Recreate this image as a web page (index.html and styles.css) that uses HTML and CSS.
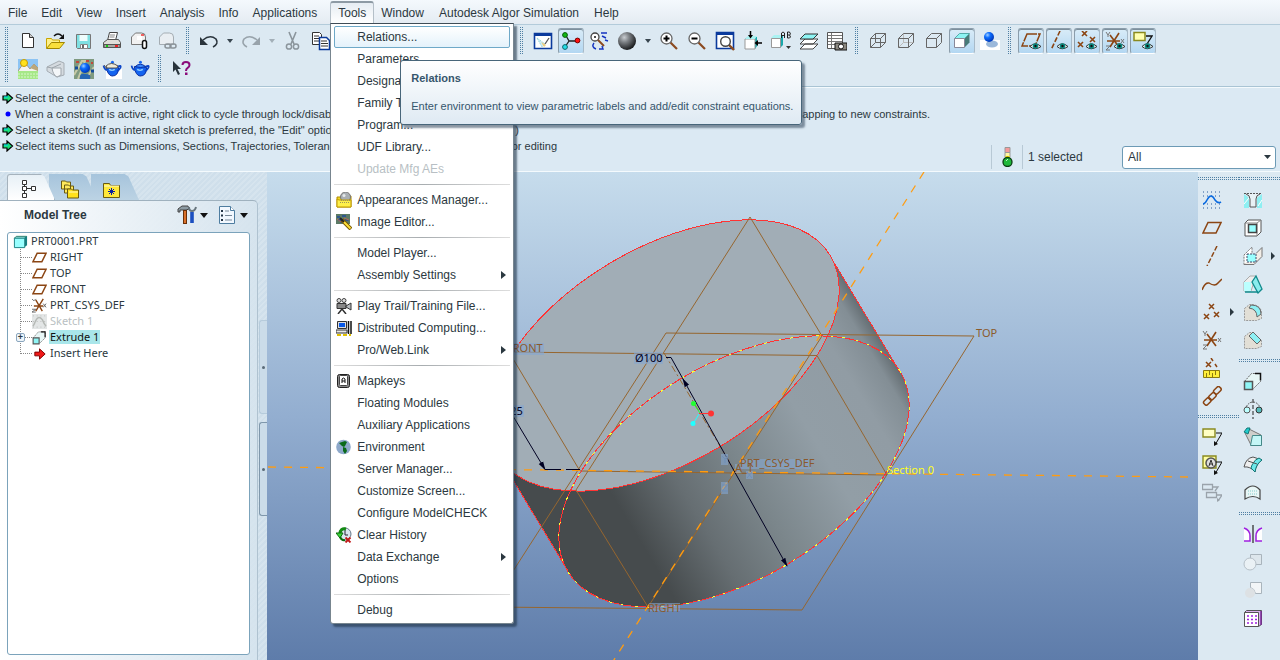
FILE: index.html
```html
<!DOCTYPE html>
<html lang="en">
<head>
<meta charset="utf-8">
<title>PRT0001</title>
<link rel="stylesheet" href="styles.css">
</head>
<body>
<svg class="defs" aria-hidden="true">
  <defs>
    <radialGradient id="ball" cx=".35" cy=".3" r=".7"><stop offset="0" stop-color="#c8ccd0"/><stop offset=".4" stop-color="#7b7f83"/><stop offset="1" stop-color="#1c1e20"/></radialGradient>
    <radialGradient id="blueball" cx=".35" cy=".3" r=".7"><stop offset="0" stop-color="#9fd0ff"/><stop offset=".4" stop-color="#0a6cff"/><stop offset="1" stop-color="#0038b8"/></radialGradient>
    <symbol id="eye" viewBox="0 0 11 8"><path d="M0 4.500Q5 -1 11 4.500Q5 9 0 4.500z" fill="#eef4f4" stroke="#333" /><circle cx="5.500" cy="4" r="2.800" fill="#0a8a80"/><circle cx="5.500" cy="4" r="1.200" fill="#111"/></symbol>
    <symbol id="plane" viewBox="0 0 16 12"><path d="M5.500 1.500H15L10.500 10.500H1z" fill="none" stroke="#8b4513" stroke-width="1.600"/></symbol>
    <symbol id="go" viewBox="0 0 12 12"><path d="M1 4h4V1l5.500 5L5 11V8H1z" fill="#1be07a" stroke="#000" stroke-width="1.200"/><path d="M2 5h4" stroke="#0cf"/></symbol>
    <symbol id="wire" viewBox="0 0 20 20"><path d="M2.500 7.500h10v9h-10zM7.500 2.500h10v9h-10zM2.500 7.500l5-5M12.500 7.500l5-5M12.500 16.500l5-5M2.500 16.500l5-5" fill="none" stroke="#666"/></symbol>
    <symbol id="csys" viewBox="0 0 20 20"><path d="M2 10h13M5 4l9 12M14 2L5 16" stroke="#8b4513" stroke-width="1.600" fill="none"/><path d="M1 1l2 3 2-3M3 4v2M16 8l3 4M19 8l-3 4M1 15h4l-4 4h4" stroke="#777" fill="none"/></symbol>
    <symbol id="branch" viewBox="0 0 12 16"><path d="M.5 0v16M1 8.500h11" stroke="#888" stroke-dasharray="1 1"/></symbol>
    <symbol id="branch-end" viewBox="0 0 12 16"><path d="M.5 0v9M1 8.500h11" stroke="#888" stroke-dasharray="1 1"/></symbol>
    <symbol id="extrude" viewBox="0 0 20 20"><path d="M1.500 10.500l7-8h9v8l-7 7" fill="#e7f6f6" stroke="#666" stroke-dasharray="2 1"/><path d="M12 2.500h5.500v7" stroke="#111" fill="none" stroke-width="1.500"/><path d="M1.500 10.500h8v8h-8z" fill="#8ff5f5" stroke="#555" stroke-width="1.500"/></symbol>
    <symbol id="teapot" viewBox="0 0 20 18"><path d="M4 7q1 9 6 10q7 0 7-9q-6-3-13-1z" fill="#1464f0" stroke="#052a9c"/><path d="M4.500 11Q2 10 1 6M16 7q4-2 3 1t-4 4" fill="none" stroke="#0b45c8" stroke-width="1.800"/><path d="M5 7q5-5 11 0q-5 2-11 0z" fill="#3c8aff" stroke="#052a9c"/><circle cx="10.500" cy="2.500" r="1.600" fill="#1464f0"/><path d="M7 10q3 2 6 0" stroke="#8fd0ff" fill="none" stroke-width="1.500"/></symbol>
  </defs>
</svg>

<header class="menubar">
  <nav class="menus">
    <button class="menu-title">File</button>
    <button class="menu-title">Edit</button>
    <button class="menu-title">View</button>
    <button class="menu-title">Insert</button>
    <button class="menu-title">Analysis</button>
    <button class="menu-title">Info</button>
    <button class="menu-title">Applications</button>
    <div class="menu-open">
      <button class="menu-title active" aria-expanded="true">Tools</button>
      <div class="popup">
        <div class="highlight-wrap">
          <button class="item highlighted" aria-describedby="tip">Relations...</button>
          <div class="tooltip" id="tip" role="tooltip">
            <strong>Relations</strong>
            <p>Enter environment to view parametric labels and add/edit constraint equations.</p>
          </div>
        </div>
        <button class="item">Parameters...</button>
        <button class="item">Designate...</button>
        <button class="item">Family Table...</button>
        <button class="item">Program...</button>
        <button class="item">UDF Library...</button>
        <button class="item" disabled>Update Mfg AEs</button>
        <hr>
        <button class="item"><svg class="item-icon" viewBox="0 0 16 16"><path d="M1 5h4l2-2 8 1v11H1z" fill="#f4dc20" stroke="#b08a00"/><circle cx="9.500" cy="5" r="5" fill="#a9afb4" stroke="#777"/><circle cx="8" cy="3.500" r="1.500" fill="#e6eaec"/><path d="M1 15V7l2 1h12v7z" fill="#fff04a" stroke="#c09a00"/><path d="M5 8.500h9M4 10.500h9" stroke="#9a9560" stroke-dasharray="1 1"/></svg>Appearances Manager...</button>
        <button class="item"><svg class="item-icon" viewBox="0 0 16 16"><path d="M0 0h14v10H0z" fill="#5c7a66"/><path d="M1 3h3M6 2h4M2 6h5M9 6h4M4 8h4" stroke="#214c9a" stroke-width="1.500"/><path d="M1 5l4 3M8 4l5 2" stroke="#b96a52"/><path d="M6 6l9 9" stroke="#7a5800" stroke-width="4"/><path d="M6.500 6.500l8 8" stroke="#ffe03a" stroke-width="2"/><path d="M4 4l4 4" stroke="#222" stroke-width="2"/></svg>Image Editor...</button>
        <hr>
        <button class="item">Model Player...</button>
        <button class="item submenu">Assembly Settings</button>
        <hr>
        <button class="item"><svg class="item-icon" viewBox="0 0 16 16"><circle cx="3" cy="2.500" r="2" fill="#ddd" stroke="#444"/><circle cx="8" cy="2.500" r="2" fill="#ddd" stroke="#444"/><path d="M1 5.500h9v5H1z" fill="#888" stroke="#333"/><path d="M10 8l5-3v7l-5-3z" fill="#b8bcc0" stroke="#333"/><path d="M6 11l-4 5M6 11l4 5" stroke="#333" stroke-width="1.500"/></svg>Play Trail/Training File...</button>
        <button class="item"><svg class="item-icon" viewBox="0 0 16 16"><path d="M1.500 1.500h9v7h-9z" fill="#ddd" stroke="#333"/><path d="M3 3h6v4H3z" fill="#0758e8"/><path d="M0 10h11v3H0z" fill="#e8e8e8" stroke="#333"/><path d="M12.500 1v13M15 1v13" stroke="#111" stroke-width="1.500"/><path d="M1 15h14" stroke="#e0c000" stroke-width="2" stroke-dasharray="4 2"/></svg>Distributed Computing...</button>
        <button class="item submenu">Pro/Web.Link</button>
        <hr>
        <button class="item"><svg class="item-icon" viewBox="0 0 16 16"><rect x="1.500" y="1.500" width="12" height="13" rx="2" fill="#888" stroke="#222"/><rect x="3.500" y="2.500" width="8" height="10" rx="1" fill="#fff" stroke="#444"/><path d="M6 10V6l1.500-1L9 6v4M6 8h3" stroke="#111" fill="none"/></svg>Mapkeys</button>
        <button class="item">Floating Modules</button>
        <button class="item">Auxiliary Applications</button>
        <button class="item"><svg class="item-icon" viewBox="0 0 16 16"><circle cx="7.500" cy="8" r="7.300" fill="#8ea9cb"/><path d="M3 4l6-2 2 1-2 4-1 1-2-1zM7 8l3 1 1 3-2 3-2-3z" fill="#0a6a1a"/></svg>Environment</button>
        <button class="item">Server Manager...</button>
        <button class="item">Customize Screen...</button>
        <button class="item">Configure ModelCHECK</button>
        <button class="item"><svg class="item-icon" viewBox="0 0 16 16"><circle cx="9" cy="7" r="6" fill="#d8e6ee" stroke="#678"/><path d="M9 3v5h3" stroke="#223" fill="none"/><path d="M10 2Q4 1 4 7" stroke="#128a12" stroke-width="3" fill="none"/><path d="M0 6h7l-3 5z" fill="#3ad83a" stroke="#0a6a0a"/><path d="M4 10q2 4 5 3" stroke="#0a6a0a" stroke-width="2" fill="none"/><path d="M9.500 10.500l5 5M14.500 10.500l-5 5" stroke="#c01818" stroke-width="1.800"/></svg>Clear History</button>
        <button class="item submenu">Data Exchange</button>
        <button class="item">Options</button>
        <hr>
        <button class="item">Debug</button>
      </div>
    </div>
    <button class="menu-title">Window</button>
    <button class="menu-title">Autodesk Algor Simulation</button>
    <button class="menu-title">Help</button>
  </nav>
</header>

<section class="toolbars">
  <div class="toolbar">
    <div class="group">
      <button class="tool" aria-label="New"><svg viewBox="0 0 20 20"><path d="M4.500 2.500h7l4 4v10h-11z" fill="#fff" stroke="#333"/><path d="M11.500 2.500v4h4" fill="#ccc" stroke="#333"/></svg></button>
      <button class="tool" aria-label="Open"><svg viewBox="0 0 20 20"><path d="M.5 17V7.500h5l1 1.500h7v3" fill="#fdf08a" stroke="#c8a400"/><path d="M.5 17.500l5-6h13l-5 6z" fill="#f9df3c" stroke="#a08600"/><path d="M8 5q4-4 8 0" fill="none" stroke="#111" stroke-width="1.500"/><path d="M18 3v5h-5z" fill="#111"/></svg></button>
      <button class="tool" aria-label="Save"><svg viewBox="0 0 20 20"><path d="M2.500 3.500h14v14h-13l-1-1z" fill="#7fe0e2" stroke="#777"/><path d="M5.500 4h8v6h-8z" fill="#effdfd"/><path d="M6.500 13.500h7v4h-7z" fill="#fff" stroke="#888"/><path d="M8 14h2v3H8z" fill="#666"/></svg></button>
      <button class="tool" aria-label="Print"><svg viewBox="0 0 20 20"><path d="M7.500 1.500h8l-2 8h-8z" fill="#fff" stroke="#444"/><path d="M8 4h5M7.500 6h5" stroke="#888"/><path d="M1.500 11.500l4-3h11l2 3v5h-17z" fill="#e0ded8" stroke="#555"/><path d="M2 13.500h16v3H2z" fill="#aaa8a2" stroke="#555"/><path d="M4 15h2" stroke="#1c1" stroke-width="2"/><path d="M13 15h3" stroke="#e22" stroke-width="2"/></svg></button>
      <button class="tool" aria-label="Attach"><svg viewBox="0 0 20 20"><path d="M1.500 13.500V6l4-4h6q4 0 4 4v7.500z" fill="#f1f1f1" stroke="#777"/><path d="M7 5h5v4H7z" fill="#fff"/><path d="M11 4h3" stroke="#e33" stroke-width="1.500"/><rect x="12.500" y="9.500" width="4" height="8" rx="2" fill="#fff" stroke="#111" stroke-width="1.500"/></svg></button>
      <button class="tool" aria-label="Link"><svg viewBox="0 0 20 20"><path d="M1.500 13.500V6l4-4h6q4 0 4 4v7.500z" fill="#e9eef2" stroke="#a5adb3"/><rect x="7" y="13" width="6" height="4" rx="2" fill="none" stroke="#8a9298" stroke-width="1.500"/><rect x="12" y="13" width="6" height="4" rx="2" fill="none" stroke="#8a9298" stroke-width="1.500"/></svg></button>
    </div>
    <div class="group edit-group">
      <button class="tool" aria-label="Undo"><svg viewBox="0 0 20 20"><path d="M4 9q7-6 13-1q3 5-3 8" fill="none" stroke="#2a343c" stroke-width="1.600"/><path d="M1 6v8h8z" fill="#2a343c"/></svg></button>
      <button class="caret" aria-label="Undo list"></button>
      <button class="tool" aria-label="Redo"><svg viewBox="0 0 20 20"><path d="M16 9q-7-6-13-1q-3 5 3 8" fill="none" stroke="#98a3ab" stroke-width="1.600"/><path d="M19 6v8h-8z" fill="#98a3ab"/></svg></button>
      <button class="caret dim" aria-label="Redo list"></button>
      <button class="tool" aria-label="Cut"><svg viewBox="0 0 20 20"><path d="M6 1l5 12M13 1L8 13" stroke="#8b959c" stroke-width="1.600"/><circle cx="6" cy="15.500" r="2.600" fill="none" stroke="#8b959c" stroke-width="1.500"/><circle cx="13" cy="15.500" r="2.600" fill="none" stroke="#8b959c" stroke-width="1.500"/></svg></button>
      <button class="tool" aria-label="Copy"><svg viewBox="0 0 20 20"><path d="M1.500 1.500h7l2 2v10h-9z" fill="#fff" stroke="#333"/><path d="M3 5h5M3 7.500h5M3 10h5" stroke="#333"/><path d="M8.500 6.500h7l3 3v9h-10z" fill="#fff" stroke="#0a3a9a" stroke-width="1.500"/><path d="M10 10h6M10 12.500h7M10 15h7" stroke="#333"/></svg></button>
    </div>
    <div class="group">
      <button class="tool" aria-label="Repaint"><svg viewBox="0 0 20 20"><path d="M1.500 2.500h17v15h-17z" fill="#fff" stroke="#0b3a9c" stroke-width="1.600"/><path d="M1 2h18v3H1z" fill="#0b3a9c"/><path d="M4 7l8 6-3 3z" fill="#cdeefa" stroke="#8cc" stroke-dasharray="1 1"/><path d="M12 13l4-6" stroke="#555" stroke-width="1.300"/><path d="M8 11l5 3-2 2z" fill="#f3cf7a"/></svg></button>
      <button class="tool pressed" aria-label="Spin centre"><svg viewBox="0 0 20 20"><path d="M4 3l4 7-4 6M8 10h8" stroke="#222" stroke-width="1.300" fill="none"/><circle cx="4" cy="4" r="2.400" fill="#12b812" stroke="#075b07"/><circle cx="4" cy="16" r="2.400" fill="#23dfe8" stroke="#08686c"/><circle cx="16.500" cy="9.500" r="2.400" fill="#f11" stroke="#700"/></svg></button>
      <button class="tool" aria-label="Orient mode"><svg viewBox="0 0 20 20"><circle cx="6" cy="6" r="4" fill="#fff" stroke="#444" stroke-width="1.300"/><path d="M5 6h2M6 5v2" stroke="#111"/><path d="M9 9l6 6" stroke="#8b4a20" stroke-width="2"/><path d="M12 2h6M13 5l4 2M16 9l3 1M5 12q-3 4 2 6M10 18h4l-1-3" fill="none" stroke="#1433c0" stroke-width="1.400"/></svg></button>
      <button class="tool" aria-label="Appearance"><svg viewBox="0 0 20 20"><circle cx="10" cy="10" r="9" fill="url(#ball)"/></svg></button>
      <button class="caret" aria-label="Appearance list"></button>
      <button class="tool" aria-label="Zoom in"><svg viewBox="0 0 20 20"><path d="M11 11l7 7" stroke="#8b4a20" stroke-width="2.200"/><circle cx="7.500" cy="7.500" r="5.500" fill="#fff" stroke="#666" stroke-width="1.300"/><path d="M4.500 7.500h6M7.500 4.500v6" stroke="#000" stroke-width="2"/></svg></button>
      <button class="tool" aria-label="Zoom out"><svg viewBox="0 0 20 20"><path d="M11 11l7 7" stroke="#8b4a20" stroke-width="2.200"/><circle cx="7.500" cy="7.500" r="5.500" fill="#fff" stroke="#666" stroke-width="1.300"/><path d="M4.500 7.500h6" stroke="#000" stroke-width="2"/></svg></button>
      <button class="tool" aria-label="Refit"><svg viewBox="0 0 20 20"><path d="M1.500 1.500h17v16h-17z" fill="#fff" stroke="#0b3a9c" stroke-width="1.600"/><path d="M1 1h18v3H1z" fill="#0b3a9c"/><path d="M14 14l5 5" stroke="#8b4a20" stroke-width="2.400"/><circle cx="10.500" cy="10.500" r="4.800" fill="#fff" stroke="#444" stroke-width="1.400"/></svg></button>
      <button class="tool" aria-label="Reorient"><svg viewBox="0 0 20 20"><path d="M2 8l3-2h9v9l-2 3" fill="#18a8ac"/><path d="M2 8h10v10H2z" fill="#fff" stroke="#999"/><path d="M2 8l3-3h9l-2 3z" fill="#aaf2f2"/><path d="M7.500 0v5M19 12h-5" stroke="#000" stroke-width="1.500"/><path d="M5 4h5L7.500 7.500zM15 9v6l-3.500-3z" fill="#000"/></svg></button>
      <button class="tool" aria-label="Saved views"><svg viewBox="0 0 20 20"><path d="M9 17V7l3-3v10z" fill="#18a8ac"/><path d="M.5 7.500h9v9h-9z" fill="#fff" stroke="#999"/><path d="M0 7l3-3h9l-2 3z" fill="#aaf2f2"/><path d="M10.500 7V2l1.500-1 1.500 1v5M10.500 4.500h3M16.500 1v6h2l1-1-1-2 1-1-1-2zM16.500 4h2" stroke="#222" fill="none"/><path d="M15 15h5l-2.500 3z" fill="#333"/></svg></button>
      <button class="tool" aria-label="Layers"><svg viewBox="0 0 20 20"><path d="M1 18l5-5h13l-5 5zM1 13l5-5h13l-5 5z" fill="#fff" stroke="#444"/><path d="M1 8l5-5h13l-5 5z" fill="#8df3f3" stroke="#333"/></svg></button>
      <button class="tool" aria-label="View manager"><svg viewBox="0 0 20 20"><path d="M.5 1.500h15v16H.5z" fill="#fff" stroke="#555"/><path d="M1 4.500h14M1 7.500h14M1 10.500h14M1 13.500h8M4.500 2v15" stroke="#777"/><path d="M8 12h12v7H8z" fill="#8b8880" stroke="#111"/><circle cx="14" cy="15.500" r="2.500" fill="#fff" stroke="#111"/></svg></button>
    </div>
    <div class="group">
      <button class="tool" aria-label="Wireframe"><svg viewBox="0 0 20 20"><use href="#wire"/></svg></button>
      <button class="tool" aria-label="Hidden line"><svg viewBox="0 0 20 20"><path d="M7.500 2.500v9h10M2.500 16.500l5-5" fill="none" stroke="#bbb"/><path d="M2.500 7.500h10v9h-10zM2.500 7.500l5-5h10v9l-5 5M12.500 7.500l5-5" fill="none" stroke="#666"/></svg></button>
      <button class="tool" aria-label="No hidden"><svg viewBox="0 0 20 20"><path d="M2.500 7.500h10v9h-10zM2.500 7.500l5-5h10v9l-5 5M12.500 7.500l5-5" fill="none" stroke="#666"/></svg></button>
      <button class="tool pressed" aria-label="Shading"><svg viewBox="0 0 20 20"><path d="M12.500 7.500l5-5v9l-5 5z" fill="#477a78"/><path d="M2.500 7.500l5-5h10l-5 5z" fill="#8df3f3" stroke="#5aa"/><path d="M2.500 7.500h10v9h-10z" fill="#fff" stroke="#889"/></svg></button>
      <button class="tool" aria-label="Enhanced realism"><svg viewBox="0 0 20 20"><path d="M0 9h20v10H0z" fill="#fff"/><ellipse cx="12" cy="13" rx="6" ry="3.500" fill="#9bb8da"/><circle cx="9" cy="6" r="5" fill="url(#blueball)"/></svg></button>
    </div>
    <div class="group">
      <button class="tool pressed" aria-label="Plane display"><svg viewBox="0 0 20 20"><path d="M6 3h13l-5 12H1z" fill="none" stroke="#8b4513" stroke-width="1.500" stroke-dasharray="10 1"/><use href="#eye" x="9" y="11" width="11" height="8"/></svg></button>
      <button class="tool pressed" aria-label="Axis display"><svg viewBox="0 0 20 20"><path d="M11 0L2 19" stroke="#8b4513" stroke-width="1.600" stroke-dasharray="5 2"/><use href="#eye" x="8" y="11" width="11" height="8"/></svg></button>
      <button class="tool pressed" aria-label="Point display"><svg viewBox="0 0 20 20"><path d="M5 0l5 5M10 0L5 5M13 6l5 5M18 6l-5 5M1 11l5 5M6 11l-5 5" stroke="#8b4513" stroke-width="1.600"/><use href="#eye" x="9" y="11" width="11" height="8"/></svg></button>
      <button class="tool pressed" aria-label="Csys display"><svg viewBox="0 0 20 20"><use href="#csys"/><use href="#eye" x="9" y="11" width="11" height="8"/></svg></button>
      <button class="tool pressed" aria-label="Annotation display"><svg viewBox="0 0 20 20"><path d="M1 1.500h11v8H1z" fill="#ffffb0" stroke="#8a8a20" stroke-width="1.500"/><path d="M13 5h6l-5 8" fill="none" stroke="#111" stroke-width="1.300"/><use href="#eye" x="9" y="11" width="11" height="8"/></svg></button>
    </div>
  </div>
  <div class="toolbar">
    <div class="group">
      <button class="tool" aria-label="Scene"><svg viewBox="0 0 20 20"><path d="M0 0h20v12H0z" fill="#8cc4f4"/><path d="M0 12L5 5h3l4 5 4-5 4 4v4H0z" fill="#f4f4ee" stroke="#a09a88"/><path d="M12 9l4-4 4 4v3z" fill="#bba77a"/><circle cx="6" cy="4" r="3.500" fill="#ffe21c" stroke="#c79b00"/><path d="M0 12h20v8H0z" fill="#a6e887"/><path d="M0 15h20M0 18h20" stroke="#d9f7cb" stroke-dasharray="2 1"/></svg></button>
      <button class="tool" aria-label="Perspective"><svg viewBox="0 0 20 20"><path d="M1 8l12-6 5 2v12l-7 2L1 12z" fill="#d5dbe0" stroke="#a5adb3"/><path d="M6 9h9v7l-4 2q-4-2-5-9z" fill="#f3f6f8" stroke="#9ea6ac"/><path d="M1 8l5 1 9-4" stroke="#9ea6ac" fill="none"/></svg></button>
      <button class="tool" aria-label="Texture"><svg viewBox="0 0 20 20"><path d="M0 0h20v20H0z" fill="#7f9a80"/><path d="M0 16L8 2h3L4 20M12 20L20 8" stroke="#c7c9a6" stroke-width="2" fill="none"/><path d="M12 2h3M17 4h2M2 3h3M14 17h2" stroke="#c3483a" stroke-width="2"/><path d="M17 12h3M1 9h3" stroke="#144c9a" stroke-width="3"/><circle cx="11" cy="9" r="5" fill="url(#blueball)"/><path d="M6 20q-1-6 5-5 7 0 5 5z" fill="#2666b4"/></svg></button>
      <button class="tool" aria-label="Render window"><svg viewBox="0 0 20 20"><path d="M4 10h16v10H4z" fill="#fff"/><use href="#teapot" y="1" width="20" height="17"/><path d="M4 7q5-5 12 0l-1 2H5zM2 6l3 4" fill="#efe9d6" stroke="#555"/></svg></button>
      <button class="tool" aria-label="Render"><svg viewBox="0 0 20 20"><use href="#teapot" y="1" width="20" height="17"/></svg></button>
    </div>
    <div class="group">
      <button class="tool" aria-label="Context help"><svg viewBox="0 0 20 20"><path d="M2 2v11l2.500-2.500L7 16l2-1-2.500-5H10z" fill="#28343c"/><path d="M11.500 6q0-3 3.500-3t3.500 3q0 2-2 3-1.500 1-1.500 3" fill="none" stroke="#8a0a7a" stroke-width="2"/><path d="M14 13.500h2.500V16H14z" fill="#8a0a7a"/></svg></button>
    </div>
  </div>
</section>

<section class="messages">
  <ul class="log">
    <li><svg class="mark" viewBox="0 0 12 12"><use href="#go"/></svg><span>Select the center of a circle.</span></li>
    <li class="reach-far"><svg class="mark" viewBox="0 0 12 12"><circle cx="6" cy="6" r="2.500" fill="#00f"/></svg><span>When a constraint is active, right click to cycle through lock/disable</span><span class="tail">snapping to new constraints.</span></li>
    <li class="reach-near"><svg class="mark" viewBox="0 0 12 12"><use href="#go"/></svg><span>Select a sketch. (If an internal sketch is preferred, the "Edit" option</span><span class="tail">)</span></li>
    <li class="reach-mid"><svg class="mark" viewBox="0 0 12 12"><use href="#go"/></svg><span>Select items such as Dimensions, Sections, Trajectories, Tolerances</span><span class="tail">for editing</span></li>
  </ul>
  <div class="status">
    <span class="light"><svg viewBox="0 0 12 20"><path d="M4 .5h5v5H4z" fill="#f59a9a" stroke="#999"/><path d="M4 5.500h5v5H4z" fill="#fff7a0" stroke="#999"/><path d="M4.500 10h4" stroke="#e5d000" stroke-width="2"/><circle cx="6.500" cy="15" r="4.500" fill="#1fb83a" stroke="#0a3d12" stroke-width="1.300"/><path d="M5 14l2-2" stroke="#bff5c8"/></svg></span>
    <label class="count" for="filter">1 selected</label>
    <select id="filter" class="filter"><option>All</option></select>
  </div>
</section>

<main class="work">
  <aside class="navigator">
    <div class="tabs">
      <button class="tab current" aria-label="Model tree"><svg viewBox="0 0 20 20"><path d="M5.500 5v10M8 9.500h5" stroke="#333" fill="none"/><path d="M3.500 1.500h4v4h-4zM3.500 7.500h4v4h-4zM3.500 14.500h4v4h-4zM12.500 7.500h4v4h-4z" fill="#fff" stroke="#333"/></svg></button>
      <button class="tab" aria-label="Folders"><svg viewBox="0 0 20 20"><path d="M1.500 2h4l1 1h4v7h-9zM4.500 6h4l1 1h4v7h-9z" fill="#ffe95a" stroke="#6a5a10"/><path d="M7.500 10h4l1 1h6v8h-11z" fill="#ffe21c" stroke="#6a5a10"/><path d="M9 13h9" stroke="#fff9c0"/></svg></button>
      <button class="tab" aria-label="Favorites"><svg viewBox="0 0 20 20"><path d="M1.500 4.500h6l1 2h9v12h-16z" fill="#ffe83a" stroke="#6a5a10"/><path d="M2 7h15" stroke="#fffbd0"/><path d="M9.500 9v7M6 12.500h7M7 10l5 5M12 10l-5 5" stroke="#0a1fa0"/></svg></button>
    </div>
    <div class="panel">
      <div class="panel-head">
        <h2>Model Tree</h2>
        <button class="head-tool" aria-label="Settings"><svg viewBox="0 0 20 20"><path d="M1 4l4-3h6l1 3-3 1H3v2H1z" fill="#8c9ba4" stroke="#444"/><path d="M8 5v14" stroke="#6a3008" stroke-width="4"/><path d="M8 6v12" stroke="#d9702a" stroke-width="2"/><path d="M15 7v11" stroke="#1b4fc0" stroke-width="3.600"/><path d="M12 2q0 4 3 4t4-4" fill="none" stroke="#67757d" stroke-width="2"/></svg></button>
        <button class="head-tool" aria-label="Show"><svg viewBox="0 0 20 20"><path d="M2.500 1.500h11l4 4v13h-15z" fill="#f2f8ff" stroke="#4e7da0"/><path d="M13.500 1.500v4h4" fill="#fff" stroke="#4e7da0"/><path d="M4 6h2M4 10.500h2M4 15h2" stroke="#234" stroke-width="2"/><path d="M8 6h4M8 10.500h7M8 15h7" stroke="#789"/></svg></button>
      </div>
      <div class="tree">
        <div class="node root"><svg class="node-icon" viewBox="0 0 16 16"><path d="M1.500 4.500l2-2h11l-2 2z" fill="#bff" stroke="#276" /><path d="M12 4l3-2v10l-3 2z" fill="#177f80"/><path d="M1.500 4.500h11v10h-11z" fill="#9ff" stroke="#177f80"/></svg><span>PRT0001.PRT</span></div>
        <ul>
          <li class="node"><svg class="branch"><use href="#branch"/></svg><svg class="node-icon" viewBox="0 0 16 16"><use href="#plane" y="2" width="16" height="12"/></svg><span>RIGHT</span></li>
          <li class="node"><svg class="branch"><use href="#branch"/></svg><svg class="node-icon" viewBox="0 0 16 16"><use href="#plane" y="2" width="16" height="12"/></svg><span>TOP</span></li>
          <li class="node"><svg class="branch"><use href="#branch"/></svg><svg class="node-icon" viewBox="0 0 16 16"><use href="#plane" y="2" width="16" height="12"/></svg><span>FRONT</span></li>
          <li class="node"><svg class="branch"><use href="#branch"/></svg><svg class="node-icon" viewBox="0 0 16 16"><path d="M2 8.500h10M4 2l7 12M12 1L4 14" stroke="#8b4513" stroke-width="1.500"/><path d="M0 1l2 2 2-2M12 6l3 4M15 6l-3 4M0 12h4l-4 3h4" stroke="#666" fill="none"/></svg><span>PRT_CSYS_DEF</span></li>
          <li class="node off"><svg class="branch"><use href="#branch"/></svg><svg class="node-icon" viewBox="0 0 16 16"><path d="M0 0h16v16H0z" fill="#e3e6e6"/><path d="M1 13q1-1 3-6 3-6 7-1 2 5 4 7" fill="none" stroke="#b5b9b5" stroke-width="1.500"/><path d="M1 2h15M1 8h15M1 14h15" stroke="#bbb" stroke-dasharray="1 3"/></svg><span>Sketch 1</span></li>
          <li class="node selected"><button class="expander" aria-label="Expand">+</button><svg class="branch"><use href="#branch"/></svg><svg class="node-icon" viewBox="0 0 16 16"><use href="#extrude" width="16" height="16"/></svg><span>Extrude 1</span></li>
          <li class="node"><svg class="branch"><use href="#branch-end"/></svg><svg class="node-icon" viewBox="0 0 16 16"><path d="M3 6.500h5V3l6 5.500L8 14v-3.500H3z" fill="#f01818" stroke="#7a0000"/></svg><span>Insert Here</span></li>
        </ul>
      </div>
    </div>
    <div class="sashes"><button class="sash" aria-label="Resize navigator"></button><button class="sash strong" aria-label="Collapse navigator"></button></div>
  </aside>

  <section class="viewport">
    <svg class="scene" viewBox="267 172 931 488" preserveAspectRatio="xMidYMid slice" role="img" aria-label="Extruded cylinder">
      <defs>
        <linearGradient id="side" gradientUnits="userSpaceOnUse" x1="540" y1="471.500" x2="928" y2="471.500"><stop offset="0" stop-color="#464b4d"/><stop offset=".2" stop-color="#464b4d"/><stop offset=".36" stop-color="#666e72"/><stop offset=".52" stop-color="#7b868b"/><stop offset=".72" stop-color="#929ea6"/><stop offset=".88" stop-color="#919ca4"/><stop offset=".96" stop-color="#838e95"/><stop offset="1" stop-color="#646d72"/></linearGradient>
        <linearGradient id="wall" href="#side" gradientTransform="rotate(-31 734 471.500)"/>
        <marker id="tip-end" orient="auto-start-reverse" markerWidth="9" markerHeight="7" refX="8" refY="3.500" markerUnits="userSpaceOnUse"><path d="M0 1l9 2.500-9 2.500z" fill="#002"/></marker>
      </defs>
      <path d="M830 256L900 372 568 571 498 455z" fill="url(#wall)"/>
      <ellipse cx="734" cy="471.500" rx="194" ry="107" transform="rotate(-31 734 471.500)" fill="url(#side)"/>
      <path d="M830 256L900 372M568 571L498 455" stroke="#f33" shape-rendering="crispEdges"/>
      <ellipse cx="664" cy="355.500" rx="194" ry="107" transform="rotate(-31 664 355.500)" fill="#a1adb6" stroke="#f33" shape-rendering="crispEdges"/>
      <g fill="none" stroke="#96662f">
        <path d="M666 333L974 336 802 610 490 607z"/>
        <path d="M509 352L817 355.500 887 475 580 471z"/>
        <path d="M750 217L822 336 648 607 576 490z"/>
        <path d="M664 353L735 471" stroke-dasharray="7 3 2 3"/>
      </g>
      <ellipse cx="734" cy="471.500" rx="194" ry="107" transform="rotate(-31 734 471.500)" fill="none" stroke="#f33" shape-rendering="crispEdges"/>
      <ellipse cx="734" cy="471.500" rx="194" ry="107" transform="rotate(-31 734 471.500)" fill="none" stroke="#ff3" stroke-dasharray="2 9 3 12" shape-rendering="crispEdges"/>
      <path d="M924 172L612 663M268 467L1190 477" fill="none" stroke="#ff9c10" stroke-width="1.300" stroke-dasharray="8 8"/>
      <g stroke="#002" fill="none">
        <path d="M666 357.500h5L683 379"/>
        <path d="M683 379L787 566" marker-start="url(#tip-end)" marker-end="url(#tip-end)"/>
        <path d="M510 411L545 469.500" marker-end="url(#tip-end)"/>
        <path d="M545 469.500h35" stroke-dasharray="16 5"/>
      </g>
      <path d="M693 403l7 10" stroke="#2f3"/><path d="M699 413.500h12" stroke="#f33"/><path d="M699 414l-6 10" stroke="#2ff"/>
      <circle cx="693.500" cy="403.500" r="2.500" fill="#2f3"/><circle cx="711" cy="413.500" r="3" fill="#f33"/><circle cx="693" cy="423.500" r="2.500" fill="#2ff"/>
      <path d="M741 459h70v10h-70zM721 454h7v11h-7zM721 482h7v12h-7zM735 464h6v9h-6zM746 471h7v8h-7zM649 603h31v8h-31zM509 343h35v12h-35zM634 352h29v12h-29zM510 405h14v12h-14z" fill="#86a6d0" opacity=".6"/>
      <g class="scene-text brown">
        <text x="976" y="337">TOP</text><text x="507" y="352">FRONT</text><text x="740" y="467">PRT_CSYS_DEF</text><text x="648" y="612">RIGHT</text><text x="735" y="472">A_1</text>
      </g>
      <g class="scene-text navy"><text x="635" y="362">Ø100</text><text x="504" y="415">125</text></g>
      <text class="scene-text yellow" x="887" y="474">Section 0</text>
      <g fill="none" stroke="#6f8fb8"><path d="M722 456l3 3 3-3M725 459v4M722 485h6l-6 6h6M747 472l5 6M752 472l-5 6"/></g>
    </svg>
  </section>

  <aside class="feature-bar">
    <div class="column">
      <button class="tool" aria-label="Sketch"><svg viewBox="0 0 20 20"><path d="M1 2h18M1 6h18M1 14h18M1 18h18" stroke="#27589c" stroke-dasharray="1 3"/><path d="M1 14q2 0 4-4 4-8 8 0 3 4 6 2" fill="none" stroke="#0a6ae0" stroke-width="1.600"/></svg></button>
      <button class="tool" aria-label="Plane"><svg viewBox="0 0 20 20"><path d="M6 4.500h13L14 15H1z" fill="none" stroke="#8b4513" stroke-width="1.500"/></svg></button>
      <button class="tool" aria-label="Axis"><svg viewBox="0 0 20 20"><path d="M15 0L5 20" stroke="#8b4513" stroke-width="1.500" stroke-dasharray="5 2"/></svg></button>
      <button class="tool" aria-label="Curve"><svg viewBox="0 0 20 20"><path d="M0 16q3-8 7-7 6 4 9 0l4-4" fill="none" stroke="#8b4513" stroke-width="1.500"/></svg></button>
      <button class="tool more" aria-label="Point"><svg viewBox="0 0 20 20"><path d="M7 2l5 5M12 2L7 7M12 10l5 5M17 10l-5 5M2 12l5 5M7 12l-5 5" stroke="#8b4513" stroke-width="1.500"/></svg></button>
      <button class="tool" aria-label="Coordinate system"><svg viewBox="0 0 20 20"><use href="#csys"/></svg></button>
      <button class="tool" aria-label="Analysis"><svg viewBox="0 0 20 20"><path d="M4 4l5 5M9 4L4 9M9 0l2 3M13 6l2 3" stroke="#8b4513" stroke-width="1.500"/><path d="M1.500 12.500h16v7h-16z" fill="#ffef3a" stroke="#8a7a10"/><path d="M4.500 15v4M7.500 13v4M10.500 15v4M13.500 13v4" stroke="#8a7a10"/></svg></button>
      <button class="tool" aria-label="Reference"><svg viewBox="0 0 20 20"><g fill="none" stroke="#8b4513" stroke-width="1.500"><rect x="-4" y="-2" width="8" height="5" rx="2" transform="translate(5 15) rotate(-45)"/><rect x="-4" y="-2" width="8" height="5" rx="2" transform="translate(10 10) rotate(-45)"/><rect x="-4" y="-2" width="8" height="5" rx="2" transform="translate(15 4) rotate(-45)"/></g></svg></button>
      <span class="divider"></span>
      <button class="tool" aria-label="Annotation"><svg viewBox="0 0 20 20"><path d="M1 2h12v8H1z" fill="#ffffc4" stroke="#8a8a20" stroke-width="1.400"/><path d="M14 6h6l-7 12" fill="none" stroke="#111"/><path d="M12 19v-5l4 3z" fill="#111"/></svg></button>
      <button class="tool" aria-label="Annotation feature"><svg viewBox="0 0 20 20"><path d="M1 1h13v12H1z" fill="#ffffa0" stroke="#8a8a20" stroke-width="1.400"/><circle cx="9" cy="8" r="5" fill="#ddd" stroke="#555" stroke-width="1.500"/><path d="M7 11l2-6 2 6M7 9h4" stroke="#333" fill="none"/><path d="M14 7h6l-7 12" fill="none" stroke="#111"/><path d="M12 20v-5l4 3z" fill="#111"/></svg></button>
      <button class="tool" aria-label="Annotation group" disabled><svg viewBox="0 0 20 20"><path d="M.5 1.500h10v5H.5zM4.500 9.500h10v5h-10zM11 4h5l-3 4M15 12h5l-4 6" fill="none" stroke="#9aa3ab" stroke-width="1.300"/><path d="M15 19v-4l3 2z" fill="#9aa3ab"/></svg></button>
    </div>
    <div class="column">
      <button class="tool" aria-label="Hole"><svg viewBox="0 0 20 20"><path d="M1 4l5 4v10H1zM19 4l-5 4v10h5z" fill="#8eeff2"/><path d="M1 14l5-6M15 16l4-6" stroke="#fff"/><path d="M1 3.500h18" stroke="#555" stroke-dasharray="2 1"/><path d="M3 4q4 1 4 5v8h6V9q0-4 4-5" fill="#e8f1f5" stroke="#555"/></svg></button>
      <button class="tool" aria-label="Shell"><svg viewBox="0 0 20 20"><path d="M2 5l3-3h13v12l-4 4H2z" fill="#fff" stroke="#555"/><path d="M2 5h12v13M14 5l4-3" fill="none" stroke="#888"/><path d="M5.500 6.500h8v8h-8z" fill="#9ff" stroke="#444" stroke-width="1.500"/></svg></button>
      <button class="tool more" aria-label="Rib"><svg viewBox="0 0 20 20"><path d="M1 9l8-8v10l-8 8z" fill="#fff" stroke="#777" stroke-dasharray="2 1"/><path d="M1 18.500h10l8-8v-9l-6 6" fill="#f2eee8" stroke="#777"/><path d="M4 8h9v8H4z" fill="#9ff" stroke="#446" stroke-dasharray="2 1"/></svg></button>
      <button class="tool" aria-label="Draft"><svg viewBox="0 0 20 20"><path d="M1 8l6-6h6L8 17H1z" fill="#eee" stroke="#aaa"/><path d="M1 8h7v9H1z" fill="#bff"/><path d="M13 2l6 13-4 4-6-11z" fill="#8aeced" stroke="#118a8c" stroke-width="1.300"/><path d="M2 18h13" stroke="#118a8c" stroke-width="1.500"/></svg></button>
      <button class="tool" aria-label="Round"><svg viewBox="0 0 20 20"><path d="M1.500 6.500l5-4h4q8 2 8 9v5l-5 2h-12z" fill="#e2dfd6" stroke="#999" stroke-dasharray="2 1"/><path d="M8 3q10 0 10 9l-4 3q0-8-8-9z" fill="#8ef0f4" stroke="#666"/></svg></button>
      <button class="tool" aria-label="Chamfer"><svg viewBox="0 0 20 20"><path d="M1.500 6.500l5-4h4l8 8v6l-5 2h-12z" fill="#e2dfd6" stroke="#999" stroke-dasharray="2 1"/><path d="M6 6l4-4 8 8-4 4z" fill="#8ef0f4" stroke="#666"/></svg></button>
      <span class="divider"></span>
      <button class="tool" aria-label="Extrude"><svg viewBox="0 0 20 20"><use href="#extrude"/></svg></button>
      <button class="tool" aria-label="Revolve"><svg viewBox="0 0 20 20"><path d="M10 0v20" stroke="#222" stroke-dasharray="4 2"/><path d="M3 8q3-5 7-5t7 5" fill="none" stroke="#555" stroke-dasharray="2 1"/><circle cx="4" cy="11" r="3" fill="#bff" stroke="#555"/><circle cx="16" cy="11" r="3" fill="#5bb" stroke="#333"/></svg></button>
      <button class="tool" aria-label="Sweep"><svg viewBox="0 0 20 20"><path d="M2 6l4-4 12 6v10H8z" fill="#cfcfcb" stroke="#777"/><path d="M1 5l3-4h3l-2 6z" fill="#2cc" stroke="#177"/><path d="M9.500 8.500h9v10h-11z" fill="#c4f6f6" stroke="#488"/></svg></button>
      <button class="tool" aria-label="Boundary blend"><svg viewBox="0 0 20 20"><path d="M1 12q2-9 9-10l9 3q-6 4-7 12-5-6-11-5z" fill="#eee" stroke="#555"/><path d="M9 10q3-6 7-7l3 2q-6 4-7 12l-4-4z" fill="#6fe8ea" stroke="#177"/><path d="M5 6l9 3" stroke="#555"/></svg></button>
      <button class="tool" aria-label="Style"><svg viewBox="0 0 20 20"><path d="M2 16V7q8-8 15 0v9q-7-5-15 0z" fill="#e8f6f6" stroke="#444" stroke-width="1.200"/><path d="M5 8h10M5 11h10" stroke="#8cc" stroke-dasharray="1 1"/></svg></button>
      <span class="divider"></span>
      <button class="tool" aria-label="Mirror"><svg viewBox="0 0 20 20"><path d="M10 1v18" stroke="#333" stroke-width="1.300"/><path d="M1 4q6 2 6 8v5H1M19 4q-6 2-6 8v5h6" fill="#fff" stroke="#a020e0" stroke-width="1.500"/></svg></button>
      <button class="tool" aria-label="Merge" disabled><svg viewBox="0 0 20 20"><path d="M7.500 2.500h11v10h-11z" fill="#dde6ec" stroke="#a9b4bc"/><circle cx="7" cy="12" r="6" fill="#eaf1f5" stroke="#b6c0c8"/></svg></button>
      <button class="tool" aria-label="Trim" disabled><svg viewBox="0 0 20 20"><path d="M7.500 2.500h11v11h-6q-1-5-5-6z" fill="#f2f5f7" stroke="#a9b4bc"/><circle cx="7" cy="13" r="5" fill="#dde1e4"/></svg></button>
      <button class="tool" aria-label="Pattern"><svg viewBox="0 0 20 20"><path d="M1.500 4.500l2-2h15v14l-3 2" fill="#dcb0ee" stroke="#555"/><path d="M18 3v14" stroke="#7a2a98" stroke-width="1.500"/><path d="M1.500 4.500h14v14h-14z" fill="#fff" stroke="#555"/><path d="M4 8h10M4 11.500h10M4 15h10" stroke="#a020e0" stroke-width="1.500" stroke-dasharray="2 2"/></svg></button>
    </div>
  </aside>
</main>
</body>
</html>
```
FILE: styles.css
```css
* { box-sizing: border-box; }
body {
  margin: 0;
  min-height: 100vh;
  display: flex;
  flex-direction: column;
  background: #dce9f2;
  color: #2b3840;
  font: 12px/16px "Liberation Sans", Arial, sans-serif;
}
button { margin: 0; padding: 0; border: 0; background: none; color: inherit; font: inherit; }
ul { list-style: none; margin: 0; padding: 0; }
.defs { position: absolute; width: 0; height: 0; }

.menubar {
  height: 24px;
  background: linear-gradient(#f4f9fd, #e4ebf2);
}
.menus { display: flex; height: 100%; padding-left: 1px; }
.menu-title { height: 24px; padding: 1px 7px 0; white-space: nowrap; }
.menu-open { position: relative; z-index: 5; width: 44px; margin-left: 6px; }
.menu-title.active {
  width: 44px;
  height: 22px;
  margin-top: 1px;
  padding: 0;
  border: 1px solid #b4bfc8;
  border-top: 2px solid #8d9aa4;
  border-bottom: 0;
  border-radius: 3px 3px 0 0;
  background: linear-gradient(#e6edf3, #fff);
}
.menu-open ~ .menu-title { padding-right: 8px; }

.popup {
  position: absolute;
  top: 23px;
  left: 0;
  width: 184px;
  padding: 2px 3px;
  border: 1px solid #77858f;
  border-top-color: #3f4c56;
  border-radius: 0 0 3px 3px;
  background: #fff;
  box-shadow: 3px 3px 2px rgba(30, 50, 70, .6);
}
.popup hr {
  height: 1px;
  margin: 4px 0;
  border: 0;
  background: linear-gradient(90deg, #ddd, #a8adb0, #ddd);
}
.item {
  position: relative;
  display: flex;
  align-items: center;
  width: 100%;
  height: 22px;
  padding-left: 22px;
  border: 1px solid transparent;
  border-radius: 2px;
  text-align: left;
  white-space: nowrap;
}
.item:disabled { color: #b8bfc4; }
.item-icon { width: 16px; height: 16px; margin-left: -21px; margin-right: 5px; }
.highlight-wrap { position: relative; }
.highlighted {
  border-color: #6fa9c8;
  background: linear-gradient(#fff, #e4f2fb);
}
.submenu::after {
  content: "";
  margin-left: auto;
  margin-right: 3px;
  border: 4px solid transparent;
  border-left: 5px solid #2b3840;
  border-right: 0;
}
.tooltip {
  position: absolute;
  z-index: 6;
  top: 34px;
  left: 66px;
  width: 402px;
  padding: 9px 10px;
  border: 1px solid #48667a;
  border-radius: 3px;
  background: linear-gradient(#fff, #dfeaf3);
  box-shadow: 3px 3px 2px rgba(60, 80, 100, .6);
  color: #36566c;
  font-size: 11px;
}
.tooltip strong { display: block; }
.tooltip p { margin: 12px 0 1px; white-space: nowrap; }

.toolbars {
  padding: 2px 0 3px 6px;
  border-top: 1px solid #b3cbda;
  border-bottom: 1px solid #a9c4d4;
}
.toolbar { display: flex; height: 28px; }
.group { display: flex; align-items: center; padding: 0 5px 0 8px; position: relative; }
.group::before {
  content: "";
  position: absolute;
  left: -1px;
  top: 0;
  width: 3px;
  height: 28px;
  background: conic-gradient(transparent 75%, #4f7fa3 0) 0 0 / 2px 2px;
}
.edit-group { width: 334px; }
.tool { width: 28px; height: 28px; flex: none; display: grid; place-items: center; position: relative; }
.tool svg, .tab svg, .head-tool svg { width: 20px; height: 20px; display: block; }
.pressed {
  width: 26px;
  height: 26px;
  margin: 0 1px;
  border: 1px solid #8b9dab;
  border-right-color: #a8bac8;
  border-bottom-color: #fff;
  border-radius: 3px;
  background: linear-gradient(#d9ecf8, #b3d7f2);
  box-shadow: inset 0 1px #7d8f9c;
}
.caret { width: 14px; height: 28px; display: grid; place-items: center; }
.caret::after { content: ""; border: 3px solid transparent; border-top: 4px solid #38454e; border-bottom: 0; }
.dim { opacity: .35; }

.messages {
  display: flex;
  min-height: 85px;
  border-top: 1px solid #f4fafd;
  border-bottom: 1px solid #f4fafd;
  background: #dbe9f3;
}
.log { flex: 1; padding-top: 2px; font-size: 11px; }
.log li { display: flex; align-items: center; height: 16px; white-space: nowrap; }
.mark { width: 12px; height: 12px; margin: 0 1px 0 2px; }
.tail { margin-left: auto; }
.reach-far { width: 930px; }
.reach-mid { width: 557px; }
.reach-near { width: 519px; }
.status { align-self: flex-end; display: flex; align-items: center; height: 26px; padding: 0 4px 2px 0; }
.light { width: 32px; height: 24px; display: grid; place-items: center; border: solid #b8c9d5; border-width: 0 1px; }
.light svg { width: 12px; height: 20px; }
.count { width: 99px; padding-left: 5px; }
.filter {
  appearance: none;
  width: 154px;
  height: 23px;
  padding: 0 5px;
  border: 1px solid #6c9ab5;
  border-radius: 3px;
  background: #fff url("data:image/svg+xml,%3Csvg xmlns='http://www.w3.org/2000/svg' width='7' height='5'%3E%3Cpath d='M0 0h7L3.500 4z' fill='%232b3840'/%3E%3C/svg%3E") right 4px center no-repeat;
  color: inherit;
  font: inherit;
}

.work { flex: 1; display: flex; }
.navigator {
  position: relative;
  flex: none;
  display: flex;
  flex-direction: column;
  width: 267px;
  padding: 2px 9px 0 0;
  background: repeating-linear-gradient(135deg, #cfdfeb 0 2px, #d6e4ee 2px 4px);
}
.tabs { display: flex; padding-left: 7px; height: 26px; }
.tab {
  width: 48px;
  margin-right: -6px;
  padding: 3px 0 0 11px;
  clip-path: polygon(0 0, 70% 0, 78% 10%, 100% 100%, 0 100%);
  background: linear-gradient(#a6c4dc, #bcd3e4);
}
.tab.current { z-index: 1; border: 1px solid #a5b2bc; border-bottom: 0; border-radius: 3px 0 0 0; background: linear-gradient(#e7f0f6, #fff); }
.panel {
  flex: 1;
  display: flex;
  flex-direction: column;
  border-top: 1px solid #9fb1be;
  border-right: 1px solid #afc2d0;
  border-radius: 0 5px 0 0;
  background: linear-gradient(90deg, #fff, rgba(214, 228, 238, .8));
}
.panel-head { display: flex; align-items: center; height: 31px; padding-left: 24px; }
.panel-head h2 { margin: 0 auto 3px 0; font-size: 12px; }
.head-tool { display: flex; align-items: center; gap: 3px; width: 40px; padding-bottom: 3px; }
.head-tool::after { content: ""; border: 4px solid transparent; border-top: 5px solid #111; border-bottom: 0; }
.tree {
  flex: 1;
  margin: 0 7px 5px 7px;
  padding-left: 5px;
  border: 1px solid #7ba3bb;
  border-radius: 3px;
  background: #fff;
  font: 11px/14px "Noto Sans", Tahoma, sans-serif;
}
.tree ul { padding-left: 7px; }
.node { position: relative; display: flex; align-items: center; height: 16px; }
.node span { padding: 0 1px; }
.node-icon { width: 15px; height: 15px; margin-right: 2px; flex: none; }
.branch { width: 12px; height: 16px; flex: none; }
.off { color: #b9bfc2; }
.selected span { background: #a9e6ea; color: #111; }
.expander {
  position: absolute;
  left: -4px;
  width: 9px;
  height: 9px;
  border: 1px solid #8ba6be;
  border-radius: 2px;
  background: #eef5fb;
  font: bold 9px/7px "Liberation Sans", sans-serif;
}
.sashes { position: absolute; top: 148px; right: 0; display: grid; gap: 8px; }
.sash { width: 8px; height: 94px; border: 1px solid #b6cbdb; border-right: 0; border-radius: 3px 0 0 3px; background: #cbdce9; display: grid; place-items: center; }
.sash::after { content: ""; width: 3px; height: 3px; border-radius: 50%; background: #5a6b78; }
.strong { border-color: #7f97ab; }

.viewport { position: relative; flex: 1; min-width: 0; background: linear-gradient(#c6dcec, #93aed0 50%, #5e7caa); }
.scene { position: absolute; inset: 0; width: 100%; height: 100%; }
.scene-text { font: 11px "Noto Sans", sans-serif; }
.brown { fill: #8b5a2b; }
.navy { fill: #002; }
.yellow { fill: #ff2; }

.feature-bar { flex: none; display: grid; grid-template-columns: 41px 41px; align-content: start; padding-top: 5px; background: #dce9f2; }
.column { display: flex; flex-direction: column; }
.column::before, .divider {
  content: "";
  height: 3px;
  background: conic-gradient(transparent 75%, #4f7fa3 0) 0 0 / 2px 2px;
}
.column::before { margin-bottom: 6px; }
.divider { margin: 5px 0; }
.more::after {
  content: "";
  position: absolute;
  right: -8px;
  border: 4px solid transparent;
  border-left: 4px solid #2b3840;
  border-right: 0;
}
```
